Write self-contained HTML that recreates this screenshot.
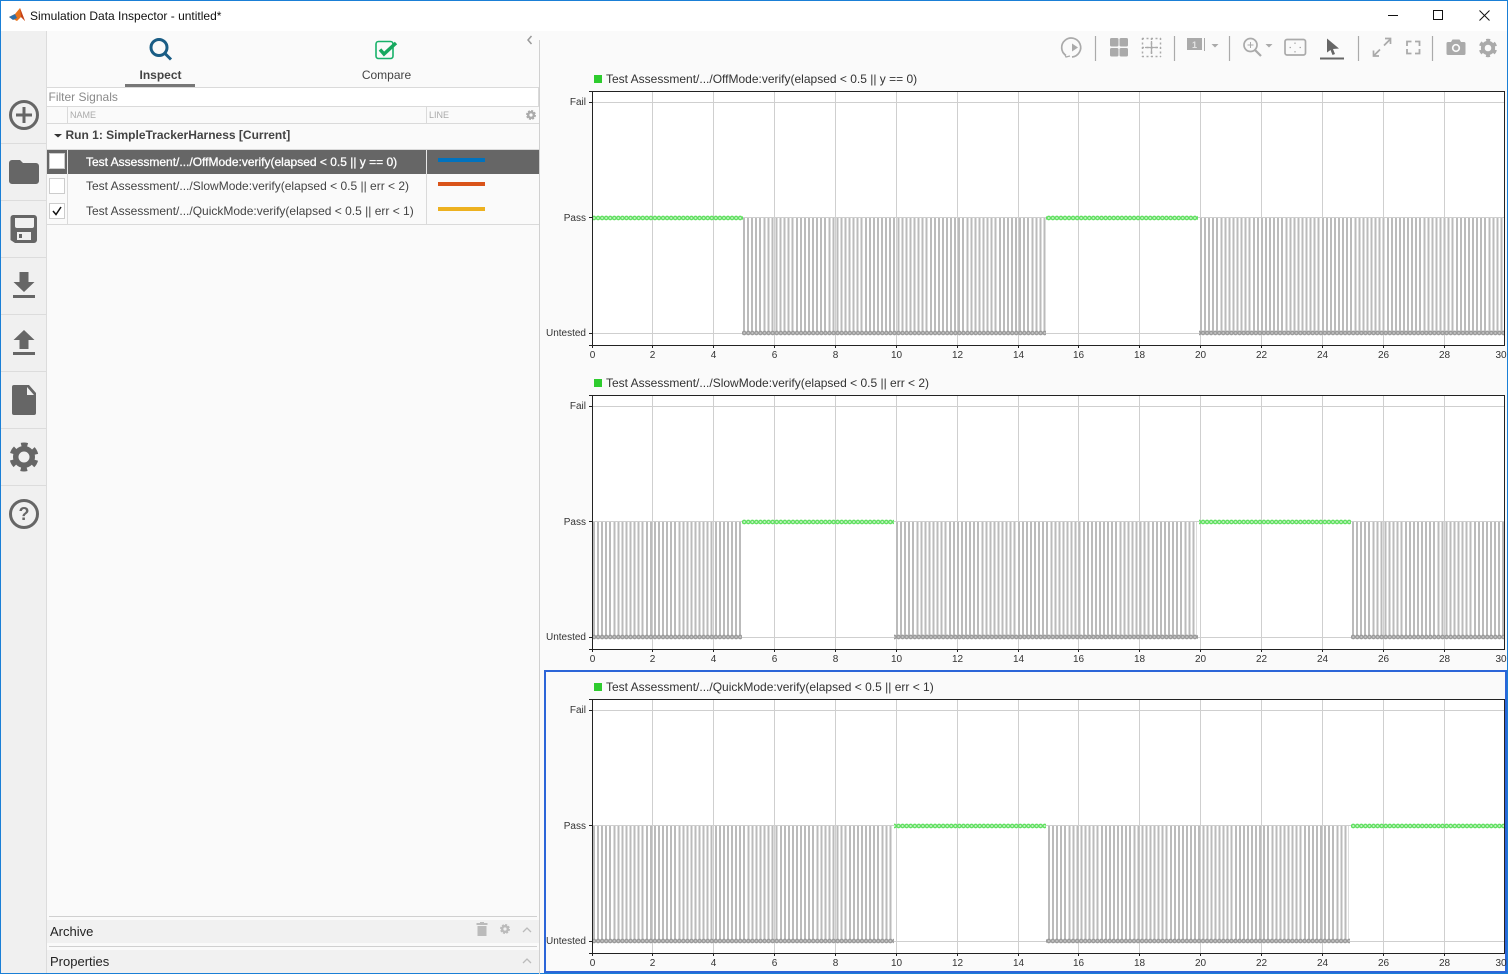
<!DOCTYPE html>
<html><head><meta charset="utf-8"><style>
html,body{margin:0;padding:0;width:1508px;height:974px;overflow:hidden;background:#fafafa}
svg{position:absolute;left:0;top:0}
text{font-family:"Liberation Sans",sans-serif;font-size:12px}
.y{font-size:10px;fill:#333;text-anchor:end}
.x{font-size:10px;fill:#333;text-anchor:middle}
.s{stroke:#bbb;stroke-width:115;stroke-dasharray:2 2.06;shape-rendering:crispEdges;fill:none}
</style></head><body>
<svg width="1508" height="974" viewBox="0 0 1508 974">
<defs>
<pattern id="gm" patternUnits="userSpaceOnUse" x="592" y="215.500" width="4.06" height="5"><circle cx="2.030" cy="2.500" r="1.700" fill="#c8f5c8" stroke="#5fdf5f" stroke-width="1.300"/></pattern>
<pattern id="gy" patternUnits="userSpaceOnUse" x="592" y="330.500" width="4.06" height="5"><circle cx="2.030" cy="2.500" r="1.700" fill="#c4c4c4" stroke="#9a9a9a" stroke-width="1.300"/></pattern>
<g id="plot">
<rect x="592.500" y="91.500" width="912" height="254" fill="#fff"/>
<path d="M652.500 92V345M713.500 92V345M774.500 92V345M835.500 92V345M896.500 92V345M957.500 92V345M1018.500 92V345M1078.500 92V345M1139.500 92V345M1200.500 92V345M1261.500 92V345M1322.500 92V345M1383.500 92V345M1444.500 92V345M592 102.500H1504M592 217.500H1504M592 333.500H1504" stroke="#cfcfcf" stroke-width="1" fill="none"/>
</g>
<g id="frame"><path d="M592.500 345.500V91.500H1504.500V345.500H592.500M589 91.500H592M589 102.500H592M589 217.500H592M589 333.500H592M589 345.500H592M592.500 345V348M652.500 345V348M713.500 345V348M774.500 345V348M835.500 345V348M896.500 345V348M957.500 345V348M1018.500 345V348M1078.500 345V348M1139.500 345V348M1200.500 345V348M1261.500 345V348M1322.500 345V348M1383.500 345V348M1444.500 345V348" stroke="#222" fill="none"/></g>
</defs>

<!-- window -->
<rect width="1508" height="974" fill="#1a7fd6"/>
<rect x="1" y="1" width="1506" height="972" fill="#fafafa"/>
<rect x="1" y="1" width="1506" height="30" fill="#fff"/>
<rect x="1" y="31" width="45" height="942" fill="#f0f0f0"/>
<rect x="46" y="31" width="1" height="942" fill="#dcdcdc"/>
<path d="M1 143.500H46M1 200.500H46M1 257.500H46M1 314.500H46M1 371.500H46M1 428.500H46M1 485.500H46" stroke="#dcdcdc"/>

<!-- title -->
<path d="M9 17L15 14L20 8L25 21L21 17L17 21Z" fill="#e8731c"/><path d="M9 17L15 14L17 18L13 20Z" fill="#2d6fa8"/><path d="M20 8L25 21L21 17Z" fill="#c4401a"/>
<text x="30" y="20" fill="#111">Simulation Data Inspector - untitled*</text>
<path d="M1388 15.500H1398" stroke="#111"/><rect x="1433.500" y="10.500" width="9" height="9" fill="none" stroke="#111"/><path d="M1479.500 10.500L1489.500 20.500M1489.500 10.500L1479.500 20.500" stroke="#111"/>

<!-- left toolbar -->
<g fill="none" stroke="#666" stroke-width="3"><circle cx="24" cy="115" r="13.500"/><path d="M16 115H32M24 107V123"/></g>
<path d="M9 163a3 3 0 0 1 3-3h8l3 3h13a3 3 0 0 1 3 3v15a3 3 0 0 1-3 3H12a3 3 0 0 1-3-3Z" fill="#666"/>
<path d="M13 215h21a3 3 0 0 1 3 3v22a3 3 0 0 1-3 3H15l-4.500-3V218a3 3 0 0 1 2.500-3Z" fill="#666"/><path d="M15 218h19v8a2 2 0 0 1-2 2H17a2 2 0 0 1-2-2Z" fill="#f0f0f0"/><rect x="17" y="232" width="14" height="8" fill="#f0f0f0"/><rect x="19" y="234" width="3" height="4" fill="#666"/>
<path d="M19.500 272h9v10h6l-10.500 10-10.500-10h6ZM13 295h22v3H13Z" fill="#666"/>
<path d="M24 330l10.500 10h-6v9h-9v-9h-6ZM13 352h22v3H13Z" fill="#666"/>
<path d="M14 385h15l7 8v20a2 2 0 0 1-2 2H14a2 2 0 0 1-2-2v-26a2 2 0 0 1 2-2Z" fill="#666"/><path d="M27 387l7 8h-7Z" fill="#f0f0f0"/>
<circle cx="24" cy="457" r="8.250" fill="none" stroke="#666" stroke-width="5.500"/><circle cx="24" cy="457" r="12.500" fill="none" stroke="#666" stroke-width="4" stroke-dasharray="6.500 6.590" stroke-dashoffset="-3.270"/>
<circle cx="24" cy="514" r="13.500" fill="none" stroke="#666" stroke-width="3"/><text x="24" y="520" text-anchor="middle" style="font-size:18px;font-weight:bold" fill="#666">?</text>

<!-- tabs -->
<circle cx="159" cy="47.500" r="8" fill="none" stroke="#1a5d85" stroke-width="3"/><path d="M165 53.500L171 59.500" stroke="#1a5d85" stroke-width="3"/>
<text x="160.500" y="79" text-anchor="middle" style="font-weight:bold" fill="#444">Inspect</text>
<rect x="125" y="84" width="70" height="3" fill="#777"/>
<rect x="376" y="41.500" width="17" height="17" rx="2.500" fill="none" stroke="#17b169" stroke-width="1.600"/><path d="M380 49.500l4 4.500 12-11" fill="none" stroke="#17a85f" stroke-width="3.500"/>
<text x="386.500" y="79" text-anchor="middle" fill="#444">Compare</text>
<path d="M531.500 36l-3.500 4 3.500 4" fill="none" stroke="#999" stroke-width="1.500"/>
<rect x="539" y="40" width="1" height="934" fill="#d0d0d0"/>

<!-- signal table -->
<rect x="47" y="88" width="492" height="19" fill="#fff"/>
<path d="M47 87.500H539M47 106.500H539M47 123.500H539M47 149.500H539M47 224.500H539M67.500 107V123M426.500 107V123M67.500 150V224M426.500 150V224" stroke="#dadada"/>
<rect x="538" y="88" width="1" height="18" fill="#dadada"/>
<text x="48.500" y="101" fill="#8a8a8a">Filter Signals</text>
<text x="70" y="118" style="font-size:9px" fill="#aaa">NAME</text>
<text x="429" y="118" style="font-size:9px" fill="#aaa">LINE</text>
<circle cx="531" cy="115" r="2.800" fill="none" stroke="#aaa" stroke-width="2.400"/><circle cx="531" cy="115" r="4.200" fill="none" stroke="#aaa" stroke-width="1.600" stroke-dasharray="2 1.300"/>
<path d="M54 134h8l-4 3.500Z" fill="#333"/>
<text x="65.500" y="139" style="font-weight:bold" fill="#444">Run 1: SimpleTrackerHarness [Current]</text>
<rect x="47" y="150" width="492" height="24" fill="#666"/>
<path d="M67.500 150V174M426.500 150V174" stroke="#e8e8e8"/>
<rect x="49.500" y="153.500" width="15" height="15" fill="#fff" stroke="#ccc"/>
<rect x="49.500" y="178.500" width="15" height="15" fill="#fff" stroke="#ccc"/>
<rect x="49.500" y="203.500" width="15" height="15" fill="#fff" stroke="#ccc"/>
<path d="M53 211l3 3.500 5-7.500" fill="none" stroke="#111" stroke-width="1.500"/>
<text x="86" y="166" fill="#fff" stroke="#fff" stroke-width="0.300">Test Assessment/.../OffMode:verify(elapsed &lt; 0.5 || y == 0)</text>
<text x="86" y="190" fill="#444">Test Assessment/.../SlowMode:verify(elapsed &lt; 0.5 || err &lt; 2)</text>
<text x="86" y="215" fill="#444">Test Assessment/.../QuickMode:verify(elapsed &lt; 0.5 || err &lt; 1)</text>
<rect x="438" y="158" width="47" height="4" fill="#0072bd"/>
<rect x="438" y="182" width="47" height="4" fill="#d95319"/>
<rect x="438" y="207" width="47" height="4" fill="#edb120"/>

<!-- archive / properties -->
<rect x="47" y="920" width="492" height="23" fill="#f1f1f1"/>
<rect x="47" y="950" width="492" height="23" fill="#f1f1f1"/>
<path d="M49 916.500H537M49 946.500H537" stroke="#d0d0d0"/>
<text x="50" y="936" style="font-size:13px" fill="#222">Archive</text>
<text x="50" y="966" style="font-size:13px" fill="#222">Properties</text>
<path d="M477.500 926h9v10h-9ZM476.500 923h11v2h-11ZM480 922h4v1h-4Z" fill="#bbb"/>
<circle cx="505" cy="929" r="2.800" fill="none" stroke="#bbb" stroke-width="2.400"/><circle cx="505" cy="929" r="4.200" fill="none" stroke="#bbb" stroke-width="1.600" stroke-dasharray="2 1.300"/>
<path d="M523 932l4-4 4 4M523 963l4-4 4 4" fill="none" stroke="#bbb" stroke-width="1.300"/>

<!-- plot toolbar -->
<g fill="none" stroke="#aaa">
<path d="M1095.500 36V61M1174.500 36V61M1229.500 36V61M1358.500 36V61M1432.500 36V61" stroke-width="1.200"/>
<path d="M1066 55.500a9.500 9.500 0 1 1 6 1.500" stroke-width="1.700"/><path d="M1064 53l2 4 4-1" stroke-width="1.200"/>
<path d="M1142 38.500h19M1142 56.500h19M1142.500 38v19M1160.500 38v19M1142 47.500h19M1151.500 38v19" stroke-width="1.500" stroke-dasharray="2 2.500"/>
<path d="M1151.500 41v13M1145 47.500h13" stroke-width="1.300"/>
<circle cx="1250.500" cy="45" r="6.500" stroke-width="1.700"/><path d="M1255 50l6 6" stroke-width="2.200"/><path d="M1247.500 45h6M1250.500 42v6" stroke-width="1"/>
<rect x="1285" y="39.500" width="20.500" height="15.500" rx="2" stroke-width="1.700"/>
<path d="M1295 42.500v1.500M1295 51v1.500M1289.500 47.500h1.500M1299.500 47.500h1.500" stroke-width="1.200"/>
<path d="M1374 55.500l6-6M1384 45.500l6-6M1385 38.500h5.500v5.500M1373.500 50.500v5.500h5.500" stroke-width="1.700"/>
<path d="M1407 46v-4.500h4.500M1415 41.500h4.500V46M1419.500 49v4.500H1415M1411.500 53.500H1407V49" stroke-width="1.800"/>
</g>
<path d="M1072 43.500v8l6-4Z" fill="#aaa"/>
<rect x="1110" y="38" width="8.500" height="8.500" rx="1.500" fill="#aaa"/><rect x="1119.500" y="38" width="8.500" height="8.500" rx="1.500" fill="#aaa"/><rect x="1110" y="48" width="8.500" height="8.500" rx="1.500" fill="#aaa"/><rect x="1119.500" y="48" width="8.500" height="8.500" rx="1.500" fill="#aaa"/>
<rect x="1187" y="38" width="15" height="12" fill="#aaa"/><rect x="1204" y="38" width="1" height="13" fill="#aaa"/><text x="1194.500" y="48" text-anchor="middle" style="font-size:9px;font-weight:bold" fill="#e4e4e4">1</text>
<path d="M1211.500 44h7l-3.500 3.500ZM1265.500 44h7l-3.500 3.500Z" fill="#aaa"/>
<path d="M1327 38.500V52.500L1330.500 50L1332.500 55L1335 54L1333 49L1339 48.500Z" fill="#666"/><rect x="1320" y="57.500" width="24" height="2" fill="#666"/>
<path d="M1448 42h3l1.500-2.500h7L1461 42h3a1.500 1.500 0 0 1 1.500 1.500v10a1.500 1.500 0 0 1-1.500 1.500h-16a1.500 1.500 0 0 1-1.500-1.500v-10A1.500 1.500 0 0 1 1448 42Z" fill="#aaa"/><circle cx="1456" cy="48" r="3.300" fill="none" stroke="#fafafa" stroke-width="1.700"/>
<circle cx="1488" cy="48" r="5.200" fill="none" stroke="#aaa" stroke-width="3.800"/><circle cx="1488" cy="48" r="7.800" fill="none" stroke="#aaa" stroke-width="2.800" stroke-dasharray="4 4.170" stroke-dashoffset="-2"/>

<!-- selected plot border -->
<rect x="545" y="671" width="961" height="301" fill="#fafafa" stroke="#2c65d8" stroke-width="2"/>

<!-- plot 1 -->
<use href="#plot"/>
<rect x="594" y="75" width="8" height="8" fill="#2ecc2e"/>
<text x="606" y="83" fill="#333">Test Assessment/.../OffMode:verify(elapsed &lt; 0.5 || y == 0)</text>
<path class="s" d="M743 275.500H1046M1200 275.500H1504"/>
<rect x="592" y="215.500" width="151" height="5" fill="url(#gm)"/><rect x="1046" y="215.500" width="152" height="5" fill="url(#gm)"/>
<rect x="742" y="330.500" width="304" height="5" fill="url(#gy)"/><rect x="1199" y="330.500" width="305" height="5" fill="url(#gy)"/>
<use href="#frame"/>
<text class="y" x="586" y="105">Fail</text><text class="y" x="586" y="221">Pass</text><text class="y" x="586" y="336">Untested</text>
<text class="x" x="592.500" y="358">0</text><text class="x" x="652.500" y="358">2</text><text class="x" x="713.500" y="358">4</text><text class="x" x="774.500" y="358">6</text><text class="x" x="835.500" y="358">8</text><text class="x" x="896.500" y="358">10</text><text class="x" x="957.500" y="358">12</text><text class="x" x="1018.500" y="358">14</text><text class="x" x="1078.500" y="358">16</text><text class="x" x="1139.500" y="358">18</text><text class="x" x="1200.500" y="358">20</text><text class="x" x="1261.500" y="358">22</text><text class="x" x="1322.500" y="358">24</text><text class="x" x="1383.500" y="358">26</text><text class="x" x="1444.500" y="358">28</text><text class="x" x="1501" y="358">30</text>

<!-- plot 2 -->
<g transform="translate(0,304)">
<use href="#plot"/>
<rect x="594" y="75" width="8" height="8" fill="#2ecc2e"/>
<text x="606" y="83" fill="#333">Test Assessment/.../SlowMode:verify(elapsed &lt; 0.5 || err &lt; 2)</text>
<path class="s" d="M593 275.500H741M896 275.500H1197M1352 275.500H1504"/>
<rect x="742" y="215.500" width="152" height="5" fill="url(#gm)"/><rect x="1199" y="215.500" width="152" height="5" fill="url(#gm)"/>
<rect x="592" y="330.500" width="150" height="5" fill="url(#gy)"/><rect x="894" y="330.500" width="304" height="5" fill="url(#gy)"/><rect x="1351" y="330.500" width="153" height="5" fill="url(#gy)"/>
<use href="#frame"/>
<text class="y" x="586" y="105">Fail</text><text class="y" x="586" y="221">Pass</text><text class="y" x="586" y="336">Untested</text>
<text class="x" x="592.500" y="358">0</text><text class="x" x="652.500" y="358">2</text><text class="x" x="713.500" y="358">4</text><text class="x" x="774.500" y="358">6</text><text class="x" x="835.500" y="358">8</text><text class="x" x="896.500" y="358">10</text><text class="x" x="957.500" y="358">12</text><text class="x" x="1018.500" y="358">14</text><text class="x" x="1078.500" y="358">16</text><text class="x" x="1139.500" y="358">18</text><text class="x" x="1200.500" y="358">20</text><text class="x" x="1261.500" y="358">22</text><text class="x" x="1322.500" y="358">24</text><text class="x" x="1383.500" y="358">26</text><text class="x" x="1444.500" y="358">28</text><text class="x" x="1501" y="358">30</text>
</g>

<!-- plot 3 -->
<g transform="translate(0,608)">
<use href="#plot"/>
<rect x="594" y="75" width="8" height="8" fill="#2ecc2e"/>
<text x="606" y="83" fill="#333">Test Assessment/.../QuickMode:verify(elapsed &lt; 0.5 || err &lt; 1)</text>
<path class="s" d="M593 275.500H893M1048 275.500H1349"/>
<rect x="894" y="215.500" width="152" height="5" fill="url(#gm)"/><rect x="1351" y="215.500" width="153" height="5" fill="url(#gm)"/>
<rect x="592" y="330.500" width="302" height="5" fill="url(#gy)"/><rect x="1046" y="330.500" width="304" height="5" fill="url(#gy)"/>
<use href="#frame"/>
<text class="y" x="586" y="105">Fail</text><text class="y" x="586" y="221">Pass</text><text class="y" x="586" y="336">Untested</text>
<text class="x" x="592.500" y="358">0</text><text class="x" x="652.500" y="358">2</text><text class="x" x="713.500" y="358">4</text><text class="x" x="774.500" y="358">6</text><text class="x" x="835.500" y="358">8</text><text class="x" x="896.500" y="358">10</text><text class="x" x="957.500" y="358">12</text><text class="x" x="1018.500" y="358">14</text><text class="x" x="1078.500" y="358">16</text><text class="x" x="1139.500" y="358">18</text><text class="x" x="1200.500" y="358">20</text><text class="x" x="1261.500" y="358">22</text><text class="x" x="1322.500" y="358">24</text><text class="x" x="1383.500" y="358">26</text><text class="x" x="1444.500" y="358">28</text><text class="x" x="1501" y="358">30</text>
</g>
</svg>
</body></html>
